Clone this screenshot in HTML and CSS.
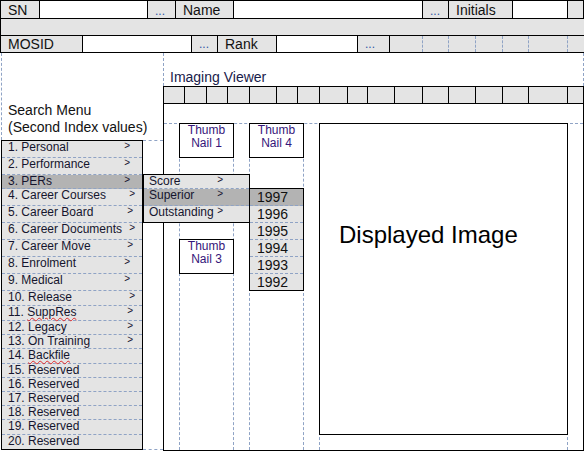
FILE: index.html
```html
<!DOCTYPE html>
<html>
<head>
<meta charset="utf-8">
<title>Imaging Viewer</title>
<link rel="stylesheet" href="styles.css">
</head>
<body>
<div class="sheet">
  <div class="topbar">
    <div class="trow r1">
      <div class="cell g">SN</div>
      <div class="cell"></div>
      <div class="cell g dots">...</div>
      <div class="cell g">Name</div>
      <div class="cell"></div>
      <div class="cell g dots">...</div>
      <div class="cell g">Initials</div>
      <div class="cell"></div>
      <div class="cell g"></div>
    </div>
    <div class="trow r2"></div>
    <div class="trow r3">
      <div class="cell g">MOSID</div>
      <div class="cell"></div>
      <div class="cell g dots">...</div>
      <div class="cell g">Rank</div>
      <div class="cell"></div>
      <div class="cell g dots">...</div>
      <div class="cell g dash"></div>
      <div class="cell g dash"></div>
      <div class="cell g dash"></div>
      <div class="cell g dash"></div>
      <div class="cell g dash"></div>
      <div class="cell g dash"></div>
      <div class="cell g nob"></div>
    </div>
  </div>

  <div class="main">
    <div class="left">
      <div class="search-head">Search Menu<br>(Second Index values)</div>
      <div class="menu-row">
        <ul class="menu">
          <li class="h17"><span>1. Personal</span><span class="ar a1">&gt;</span></li>
          <li class="h17"><span>2. Performance</span><span class="ar a1">&gt;</span></li>
          <li class="h14 hl"><span>3. PERs</span><span class="ar a1">&gt;</span></li>
          <li class="h17"><span>4. Career Courses</span><span class="ar a3">&gt;</span></li>
          <li class="h17"><span>5. Career Board</span><span class="ar a2">&gt;</span></li>
          <li class="h17"><span>6. Career Documents</span><span class="ar a3">&gt;</span></li>
          <li class="h17"><span>7. Career Move</span><span class="ar a2">&gt;</span></li>
          <li class="h17"><span>8. Enrolment</span><span class="ar a1">&gt;</span></li>
          <li class="h17"><span>9. Medical</span><span class="ar a1">&gt;</span></li>
          <li class="h15"><span>10. Release</span><span class="ar a3">&gt;</span></li>
          <li class="h15"><span>11. <span class="spell">SuppRes</span></span><span class="ar a2">&gt;</span></li>
          <li class="h14"><span>12. Legacy</span><span class="ar a2">&gt;</span></li>
          <li class="h14"><span>13. On Training</span><span class="ar a2">&gt;</span></li>
          <li class="h15"><span>14. <span class="spell">Backfile</span></span></li>
          <li class="h14"><span>15. Reserved</span></li>
          <li class="h14"><span>16. Reserved</span></li>
          <li class="h14"><span>17. Reserved</span></li>
          <li class="h14"><span>18. Reserved</span></li>
          <li class="h15"><span>19. Reserved</span></li>
          <li class="h14 last"><span>20. Reserved</span></li>
        </ul>
        <div class="menu-gap"></div>
      </div>
    </div>

    <div class="viewer">
      <div class="viewer-title">Imaging Viewer</div>
      <div class="frame">
        <div class="toolbar">
          <div></div><div></div><div></div><div></div><div></div><div></div>
          <div></div><div></div><div></div><div></div><div></div><div></div>
          <div></div><div></div><div></div><div></div><div class="nob"></div>
        </div>
        <div class="spacer"></div>
        <div class="canvas">
          <div class="vl c2"></div>
          <div class="vl c3"></div>
          <div class="vl c4"></div>
          <div class="vl c5"></div>
          <div class="vl c6"></div>
          <div class="vl c7"></div>
          <div class="thumb t1">Thumb<br>Nail 1</div>
          <div class="thumb t4">Thumb<br>Nail 4</div>
          <div class="thumb t3">Thumb<br>Nail 3</div>
          <div class="image">Displayed Image</div>
        </div>
      </div>
    </div>
  </div>

  <div class="submenu">
    <div class="sm-row sm1"><span>Score</span><span class="ar">&gt;</span></div>
    <div class="sm-row sm2 hl"><span>Superior</span><span class="ar">&gt;</span></div>
    <div class="sm-row sm3"><span>Outstanding</span><span class="ar">&gt;</span></div>
  </div>

  <div class="years">
    <div class="yr hl">1997</div>
    <div class="yr">1996</div>
    <div class="yr">1995</div>
    <div class="yr">1994</div>
    <div class="yr">1993</div>
    <div class="yr last">1992</div>
  </div>
</div>
</body>
</html>
```

FILE: styles.css
```css
* { box-sizing: border-box; }
html, body { margin: 0; padding: 0; background: #fff; }
body {
  font-family: "Liberation Sans", Arial, sans-serif;
  color: #111;
}
.sheet {
  position: relative;
  width: 584px;
  height: 452px;
  overflow: hidden;
}

/* ---------- top bar ---------- */
.trow {
  display: grid;
  border-left: 1px solid #000;
  border-bottom: 1px solid #000;
}
.r1 {
  height: 19px;
  border-top: 1px solid #000;
  grid-template-columns: 39px 108px 28px 58px 189px 26px 64px 55px 16px;
}
.r2 {
  height: 17px;
  background: #e4e4e4;
}
.r3 {
  height: 17px;
  grid-template-columns: 82px 109px 26px 59px 81px 32px 33px 26px 27px 27px 26px 39px 16px;
}
.cell {
  border-right: 1px solid #000;
  overflow: hidden;
  white-space: nowrap;
  font-size: 14px;
  padding-left: 7px;
}
.r1 .cell { line-height: 18px; }
.r3 .cell { line-height: 17px; }
.g { background: #e4e4e4; }
.cell.dots { font-size: 12px; color: #3356a6; }
.r1 .cell.dots { line-height: 21px; }
.r3 .cell.dots { line-height: 17px; }
.cell.dash { border-right: 1px dashed #8fa3c5; }
.cell.nob { border-right: none; }

/* ---------- main ---------- */
.main {
  display: flex;
  align-items: flex-start;
}
.left {
  width: 163px;
  padding-left: 1px;
}
.search-head {
  height: 87px;
  border-left: 1px dashed #8fa3c5;
  padding: 49px 0 0 6px;
  font-size: 14px;
  line-height: 17px;
  white-space: nowrap;
}
.menu-row { display: flex; }
.menu {
  list-style: none;
  margin: 0;
  padding: 0;
  width: 142px;
  height: 310px;
  border: 1px solid #000;
  background: #e4e4e4;
  color: #15152e;
}
.menu li {
  display: flex;
  align-items: flex-start;
  padding-left: 6px;
  font-size: 12px;
  line-height: 12px;
  white-space: nowrap;
  border-bottom: 1px dashed #8fa3c5;
}
.menu li.last { border-bottom: none; height: 14px; }
.h17 { height: 17px; }
.h15 { height: 15px; }
.h14 { height: 14px; }
.hl { background: #b3b3b3; }
.ar {
  margin-left: auto;
  font-size: 10px;
  line-height: 10px;
}
.a1 { padding-right: 12px; }
.a2 { padding-right: 9px; }
.a3 { padding-right: 7px; }
.spell {
  text-decoration: underline wavy #e02a2a;
  text-decoration-thickness: 1px;
  text-underline-offset: 1px;
}
.menu-gap {
  width: 20px;
  height: 310px;
  border-top: 1px dashed #8fa3c5;
  border-bottom: 1px dashed #8fa3c5;
}

/* ---------- viewer ---------- */
.viewer { width: 421px; }
.viewer-title {
  height: 33px;
  border-left: 1px dashed #8fa3c5;
  border-right: 1px dashed #8fa3c5;
  padding: 16px 0 0 6px;
  font-size: 14px;
  line-height: 16px;
  color: #18204a;
}
.frame { border: 1px solid #000; }
.toolbar {
  display: grid;
  grid-template-columns: 21px 22px 21px 22px 27px 21px 22px 28px 20px 27px 28px 26px 27px 27px 26px 39px 15px;
  height: 17px;
  border-bottom: 1px solid #000;
}
.toolbar div {
  background: #e4e4e4;
  border-right: 1px solid #000;
}
.toolbar div.nob { border-right: none; }
.spacer { height: 19px; }
.canvas {
  display: grid;
  grid-template-columns: 15px 54px 16px 54px 16px 248px 16px;
  grid-template-rows: 16px 17px 17px 14px 17px 17px 17px 17px 17px 17px 15px 15px 14px 14px 15px 14px 14px 14px 14px 15px 16px;
  border-top: 1px dashed #8fa3c5;
}
.vl {
  grid-row: 1 / -1;
  border-left: 1px dashed #8fa3c5;
}
.c2 { grid-column: 2; }
.c3 { grid-column: 3; }
.c4 { grid-column: 4; }
.c5 { grid-column: 5; }
.c6 { grid-column: 6; }
.c7 { grid-column: 7; }

.thumb {
  background: #fff;
  border: 1px solid #000;
  margin: -1px -1px -1px 0;
  text-align: center;
  font-size: 12px;
  line-height: 13px;
  color: #35167a;
  white-space: nowrap;
}
.t1 { grid-column: 2; grid-row: 1 / 3; }
.t4 { grid-column: 4; grid-row: 1 / 3; }
.t3 { grid-column: 2; grid-row: 8 / 10; margin-top: 0; }

.image {
  grid-column: 6;
  grid-row: 1 / 21;
  margin: -1px -1px -1px 0;
  border: 1px solid #000;
  background: #fff;
  padding: 97px 0 0 19px;
  font-size: 24px;
  line-height: 28px;
  color: #000;
  white-space: nowrap;
}

/* ---------- pop-up menus ---------- */
.submenu {
  position: absolute;
  left: 143px;
  top: 174px;
  width: 107px;
  border: 1px solid #000;
  background: #e4e4e4;
  color: #15152e;
  font-size: 12px;
  line-height: 12px;
}
.sm-row {
  display: flex;
  align-items: flex-start;
  padding-left: 5px;
  white-space: nowrap;
  border-bottom: 1px dashed #8fa3c5;
}
.sm-row .ar { padding-right: 26px; }
.sm1 { height: 14px; }
.sm2 { height: 17px; }
.sm3 { height: 16px; border-bottom: none; }

.years {
  position: absolute;
  left: 249px;
  top: 188px;
  width: 55px;
  border: 1px solid #000;
  background: #e4e4e4;
  font-size: 14px;
  line-height: 16px;
  color: #111;
}
.yr {
  height: 17px;
  padding-left: 7px;
  border-bottom: 1px dashed #8fa3c5;
}
.yr.last { height: 16px; border-bottom: none; }
.years .hl { background: #b3b3b3; }
```
